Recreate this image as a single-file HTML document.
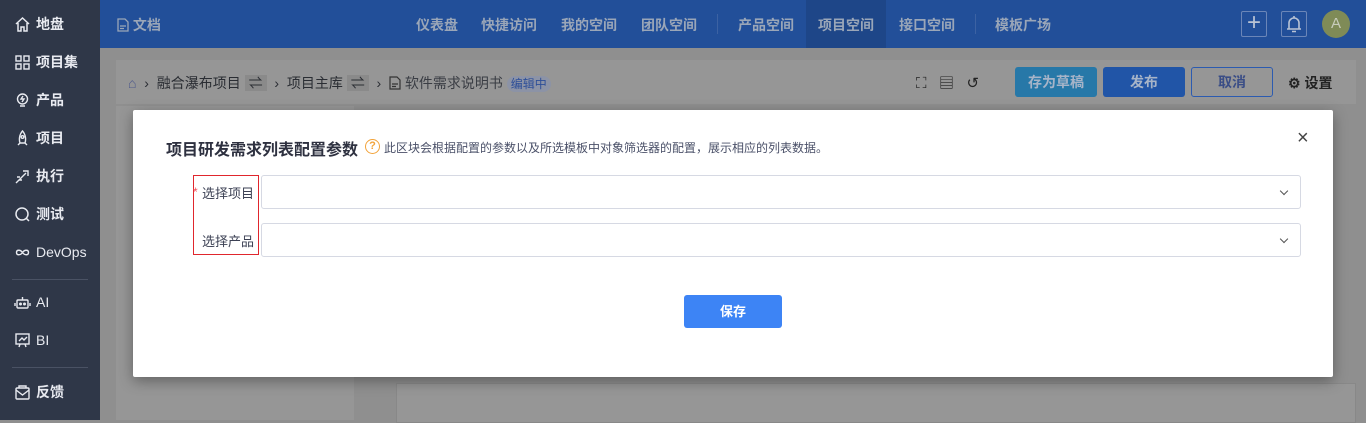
<!DOCTYPE html>
<html><head><meta charset="utf-8"><style>
*{box-sizing:border-box;margin:0;padding:0}
body{width:1366px;height:420px;overflow:hidden;position:relative;background:#8f8f8f;font-family:"Liberation Sans","Noto Sans CJK SC",sans-serif;font-size:14px}
.sb{position:absolute;left:0;top:0;width:100px;height:420px;background:#2f3748;color:#e8eaf0}
.sb div{position:absolute;left:14px;font-size:14px;font-weight:bold;display:flex;align-items:center;gap:5px;height:20px}
.sb .ic{width:17px;height:17px;display:inline-block}
.sb hr{position:absolute;left:12px;width:76px;border:0;border-top:1px solid #4a5264}
.hd{position:absolute;left:100px;top:0;width:1266px;height:48px;background:#224f99;color:#9aa6b8;font-weight:bold}
.hd span{position:absolute;top:15px;font-size:14px}
.sep{position:absolute;top:14px;width:1px;height:20px;background:#3c62a3}
.p{position:absolute;background:#969696}
.btn{position:absolute;top:67px;height:30px;border-radius:3px;color:#a7b4c8;font-weight:bold;display:flex;align-items:center;justify-content:center}
.modal{position:absolute;left:133px;top:110px;width:1200px;height:267px;background:#fff;border-radius:2px;box-shadow:0 4px 14px rgba(0,0,0,.35)}
.inp{position:absolute;left:128px;width:1040px;height:34px;border:1px solid #d6d9e3;border-radius:3px}
.inp:after{content:"";position:absolute;right:13px;top:12px;width:5px;height:5px;border-right:1.3px solid #555;border-bottom:1.3px solid #555;transform:rotate(45deg)}
.lab{position:absolute;left:69px;font-size:13px;color:#3c4154}
.doc{display:inline-block;vertical-align:-2px}
</style></head><body>
<div class="sb">
<div style="top:14px"><svg class="ic" viewBox="0 0 17 17" fill="none" stroke="#e8eaf0" stroke-width="1.5"><path d="M2 8L8.5 2L15 8M4 7v8h3v-4h3v4h3V7"/></svg>地盘</div>
<div style="top:52px"><svg class="ic" viewBox="0 0 17 17" fill="none" stroke="#e8eaf0" stroke-width="1.4"><rect x="2" y="2" width="5" height="5"/><rect x="10" y="2" width="5" height="5"/><rect x="2" y="10" width="5" height="5"/><rect x="10" y="10" width="5" height="5"/></svg>项目集</div>
<div style="top:90px"><svg class="ic" viewBox="0 0 17 17" fill="none" stroke="#e8eaf0" stroke-width="1.4"><circle cx="8.5" cy="7" r="5"/><path d="M6 14h5M9 4l-2 3h3l-2 3"/></svg>产品</div>
<div style="top:128px"><svg class="ic" viewBox="0 0 17 17" fill="none" stroke="#e8eaf0" stroke-width="1.4"><path d="M8.5 1C5 5 5 10 6 13h5c1-3 1-8-2.5-12zM6 13l-2 2M11 13l2 2"/><circle cx="8.5" cy="7" r="1.3"/></svg>项目</div>
<div style="top:166px"><svg class="ic" viewBox="0 0 17 17" fill="none" stroke="#e8eaf0" stroke-width="1.4"><path d="M2 15L12 5M9 3h5v5M3 9h3M5 12h3"/></svg>执行</div>
<div style="top:204px"><svg class="ic" viewBox="0 0 17 17" fill="none" stroke="#e8eaf0" stroke-width="1.5"><circle cx="8" cy="8" r="6"/><path d="M12 12l3 3"/></svg>测试</div>
<div style="top:242px;font-weight:normal"><svg class="ic" viewBox="0 0 17 17" fill="none" stroke="#e8eaf0" stroke-width="1.4"><path d="M8.5 8.5c-2-3-6-3-6 0s4 3 6 0 6-3 6 0-4 3-6 0z"/></svg>DevOps</div>
<hr style="top:279px">
<div style="top:292px;font-weight:normal"><svg class="ic" viewBox="0 0 17 17" fill="none" stroke="#e8eaf0" stroke-width="1.4"><rect x="3" y="6" width="11" height="8" rx="1"/><path d="M8.5 6V3M1 9v3M16 9v3"/><circle cx="6.5" cy="10" r=".8" fill="#e8eaf0"/><circle cx="10.5" cy="10" r=".8" fill="#e8eaf0"/></svg>AI</div>
<div style="top:330px;font-weight:normal"><svg class="ic" viewBox="0 0 17 17" fill="none" stroke="#e8eaf0" stroke-width="1.4"><rect x="2" y="2" width="13" height="10"/><path d="M5 9l3-3 2 2 3-3M6 12l-1 3M11 12l1 3"/></svg>BI</div>
<hr style="top:367px">
<div style="top:382px"><svg class="ic" viewBox="0 0 17 17" fill="none" stroke="#e8eaf0" stroke-width="1.4"><rect x="2" y="4" width="13" height="11" rx="1"/><path d="M2 6l6.5 5 6.5-5M5 4V2h7v2"/></svg>反馈</div>
</div>
<div class="hd">
<span style="left:17px;font-weight:bold"><svg class="doc" width="12" height="14" viewBox="0 0 12 14" fill="none" stroke="#9aa6b8" stroke-width="1.3"><path d="M1 1h7l3 3v9H1zM3 8h6M3 10.5h4"/></svg> 文档</span>
<span style="left:316px">仪表盘</span><span style="left:381px">快捷访问</span><span style="left:461px">我的空间</span><span style="left:541px">团队空间</span>
<div class="sep" style="left:617px"></div>
<span style="left:638px">产品空间</span>
<div style="position:absolute;left:706px;top:0;width:80px;height:48px;background:#1e4688"></div>
<span style="left:718px">项目空间</span><span style="left:799px">接口空间</span>
<div class="sep" style="left:875px"></div>
<span style="left:895px">模板广场</span>
<div style="position:absolute;left:1141px;top:11px;width:26px;height:26px;border:1px solid #6b86b8;border-radius:2px;color:#b9c3d4;font-size:24px;line-height:22px;text-align:center;font-weight:normal">+</div>
<div style="position:absolute;left:1181px;top:11px;width:26px;height:26px;border:1px solid #6b86b8;border-radius:2px"><svg width="24" height="24" viewBox="0 0 24 24" fill="none" stroke="#b9c3d4" stroke-width="1.6"><path d="M7 17V11a5 5 0 0 1 10 0v6M5 17h14M12 4v2M10 19.5h4"/></svg></div>
<div style="position:absolute;left:1222px;top:10px;width:28px;height:28px;border-radius:50%;background:#7f8b57;color:#c8ccbb;font-size:15px;font-weight:normal;text-align:center;line-height:28px">A</div>
</div>
<div class="p" style="left:116px;top:60px;width:1240px;height:44px"></div>
<div style="position:absolute;left:128px;top:73px;font-size:14px;color:#2a2d33;white-space:nowrap"><span style="color:#4e5a8c">⌂</span> &nbsp;›&nbsp; 融合瀑布项目 <span style="background:#8a8a8a;padding:0 4px">⇌</span> &nbsp;›&nbsp; 项目主库 <span style="background:#8a8a8a;padding:0 4px">⇌</span> &nbsp;›&nbsp; <span style="color:#3a3d44"><svg class="doc" width="12" height="14" viewBox="0 0 12 14" fill="none" stroke="#333" stroke-width="1.2"><path d="M1 1h7l3 3v9H1zM3 8h6M3 10.5h4"/></svg> 软件需求说明书 </span><span style="font-size:12px;color:#2e4f98;background:#8c93a6;border-radius:8px;padding:1px 4px">编辑中</span></div>
<div class="btn" style="left:1015px;width:82px;background:#2778a8">存为草稿</div>
<div class="btn" style="left:1103px;width:82px;background:#2155a7">发布</div>
<div class="btn" style="left:1191px;width:82px;border:1px solid #2c5bb0;color:#3a4d86">取消</div>
<div style="position:absolute;left:1288px;top:73px;font-weight:bold;color:#222">⚙ 设置</div>
<div style="position:absolute;left:916px;top:72px;color:#222;font-size:15px">⛶ &nbsp; ▤ &nbsp; ↺</div>
<div class="p" style="left:116px;top:106px;width:238px;height:314px"></div>
<div class="p" style="left:396px;top:383px;width:960px;height:40px;border:1px solid #888"></div>
<div class="modal">
<div style="position:absolute;left:33px;top:26px;font-size:16px;font-weight:bold;color:#2e3140">项目研发需求列表配置参数</div>
<div style="position:absolute;left:232px;top:29px;width:15px;height:15px;border:1.5px solid #f2a33a;border-radius:50%;color:#f2a33a;font-size:11px;font-weight:bold;text-align:center;line-height:12px">?</div>
<div style="position:absolute;left:251px;top:29px;font-size:12px;color:#4a5068">此区块会根据配置的参数以及所选模板中对象筛选器的配置，展示相应的列表数据。</div>
<div style="position:absolute;left:60px;top:65px;width:66px;height:80px;border:1.5px solid #e0262d"></div>
<div style="position:absolute;left:60px;top:75px;color:#f0505a;font-size:12px">*</div>
<div class="lab" style="top:73px">选择项目</div>
<div class="lab" style="top:121px">选择产品</div>
<div class="inp" style="top:65px"></div>
<div class="inp" style="top:113px"></div>
<div style="position:absolute;left:551px;top:185px;width:98px;height:33px;background:#3d84f5;border-radius:3px;color:#fff;font-weight:bold;font-size:13px;text-align:center;line-height:33px">保存</div>
<div style="position:absolute;left:1164px;top:17px;font-size:20px;color:#444;font-weight:normal">×</div>
</div>
</body></html>
